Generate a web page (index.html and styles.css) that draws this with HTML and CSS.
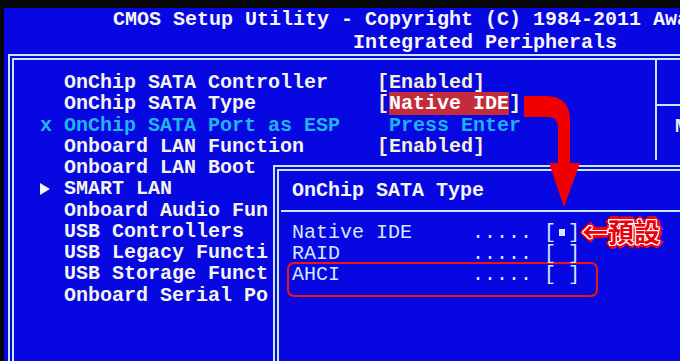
FILE: index.html
```html
<!DOCTYPE html>
<html>
	<head>
		<meta charset="utf-8">
		<title>CMOS Setup Utility</title>

		<link rel="stylesheet" href="styles.css">
	</head>
	<body>
		<div class="screen">
			<div class="title">CMOS Setup Utility - Copyright (C) 1984-2011 Awa
                    Integrated Peripherals</div>

			<div class="frame">
				<div class="menu">
					<div class="row"><span></span><span>OnChip SATA Controller</span><span class="val">[Enabled]</span></div>
					<div class="row"><span></span><span>OnChip SATA Type</span><span class="val">[<span class="sel">Native IDE</span>]</span></div>
					<div class="row off"><span>x</span><span>OnChip SATA Port as ESP</span><span class="val"> Press Enter</span></div>
					<div class="row"><span></span><span>Onboard LAN Function</span><span class="val">[Enabled]</span></div>
					<div class="row"><span></span><span>Onboard LAN Boot</span><span></span></div>
					<div class="row"><span><i class="tri"></i></span><span>SMART LAN</span><span></span></div>
					<div class="row"><span></span><span>Onboard Audio Fun</span><span></span></div>
					<div class="row"><span></span><span>USB Controllers</span><span></span></div>
					<div class="row"><span></span><span>USB Legacy Functi</span><span></span></div>
					<div class="row"><span></span><span>USB Storage Funct</span><span></span></div>
					<div class="row"><span></span><span>Onboard Serial Po</span><span></span></div>
				</div>
				<div class="help">
					<div class="help-top"></div>
					<div class="help-text">M</div>
				</div>
			</div>

			<div class="popup">
				<div class="popup-box">
					<div class="popup-title">OnChip SATA Type</div>
					<div class="popup-list">
						<div class="item">Native IDE     ..... [<i class="chk"></i>]</div>
						<div class="item">RAID           ..... [ ]</div>
						<div class="item pick">AHCI           ..... [ ]</div>
					</div>
				</div>
			</div>
		</div>

		<svg class="arrow" width="680" height="361" viewBox="0 0 680 361">
			<path d="M524 96 L546 96 Q570 96 570 120 L570 163 L580 163 L564 207 L549 163 L558 163 L558 127 Q558 117 548 117 L524 117 Z" fill="#f00000"/>
		</svg>

		<div class="note">←預設</div>
	</body>
</html>
```

FILE: styles.css
```css
* {
	margin: 0;
	padding: 0;
}

body {
	width: 680px;
	height: 361px;
	overflow: hidden;
	position: relative;
	background: #060608;
	font-family: "Liberation Mono", "DejaVu Sans Mono", monospace;
}

.screen {
	margin: 8px 0 0 4px;
	height: 353px;
	background: #0707e2;
	position: relative;
	overflow: hidden;
}

.title {
	padding-left: 109px;
	font-size: 20px;
	font-weight: bold;
	line-height: 23px;
	color: #f6f6f6;
	white-space: pre;
}

.frame {
	margin: 0 0 0 4px;
	width: 720px;
	height: 340px;
	border: 6px double #c8e6f4;
	display: flex;
}

.menu {
	width: 641px;
	flex: 0 0 641px;
	box-sizing: border-box;
	padding: 12px 0 0 26px;
	font-size: 20px;
	font-weight: bold;
	color: #f4f4ea;
}

.row {
	display: grid;
	grid-template-columns: 24px 313px auto;
	height: 21.25px;
	line-height: 21.25px;
	white-space: pre;
}

.val {
	color: #f6f2d2;
}

.sel {
	background: #c42c3c;
	color: #ffffff;
}

.off {
	color: #22b4ec;
}

.off .val {
	color: #1eb0f2;
}

.tri {
	display: inline-block;
	width: 0;
	height: 0;
	border-left: 10px solid #f4f4ea;
	border-top: 6px solid transparent;
	border-bottom: 6px solid transparent;
	vertical-align: -1px;
}

.help {
	flex: 1;
	border-left: 2px solid #c8e6f4;
}

.help-top {
	height: 44px;
	border-bottom: 2px solid #c8e6f4;
}

.help-text {
	padding: 10px 0 0 18px;
	font-size: 20px;
	font-weight: bold;
	line-height: 21px;
	color: #e8eef4;
	white-space: pre;
}

.popup {
	position: absolute;
	left: 264px;
	top: 152px;
	width: 440px;
	height: 240px;
	padding: 5px;
	background: #0707e2;
}

.popup-box {
	height: 100%;
	border: 6px double #c8e6f4;
}

.popup-title {
	height: 41px;
	box-sizing: border-box;
	margin: 0 2px;
	padding: 5px 0 0 11px;
	border-bottom: 2px solid #c8e6f4;
	font-size: 20px;
	font-weight: bold;
	line-height: 30px;
	color: #f4f6f8;
}

.popup-list {
	padding: 10px 0 0 13px;
	font-size: 20px;
	color: #d4e8ff;
}

.item {
	line-height: 21px;
	white-space: pre;
}

.chk {
	display: inline-block;
	width: 6px;
	height: 7px;
	margin: 0 3px;
	background: #d4e8ff;
	vertical-align: 2px;
}

.pick {
	width: 304px;
	margin: -2px 0 0 -5px;
	padding: 0 0 10px 3px;
	border: 2px solid #f01414;
	border-radius: 7px;
}

.arrow {
	position: absolute;
	left: 0;
	top: 0;
	pointer-events: none;
}

.note {
	position: absolute;
	left: 582px;
	top: 218px;
	font-family: "Noto Sans CJK TC", sans-serif;
	font-size: 26px;
	font-weight: bold;
	line-height: 26px;
	color: #e8000c;
	white-space: nowrap;
	text-shadow:
		1px 0 #fff, -1px 0 #fff, 0 1px #fff, 0 -1px #fff,
		1px 1px #fff, -1px -1px #fff, 1px -1px #fff, -1px 1px #fff,
		3px 0 #f00, -3px 0 #f00, 0 3px #f00, 0 -3px #f00,
		2px 2px #f00, -2px -2px #f00, 2px -2px #f00, -2px 2px #f00,
		4px 0 #f00, -4px 0 #f00, 0 4px #f00, 0 -4px #f00;
}
```
